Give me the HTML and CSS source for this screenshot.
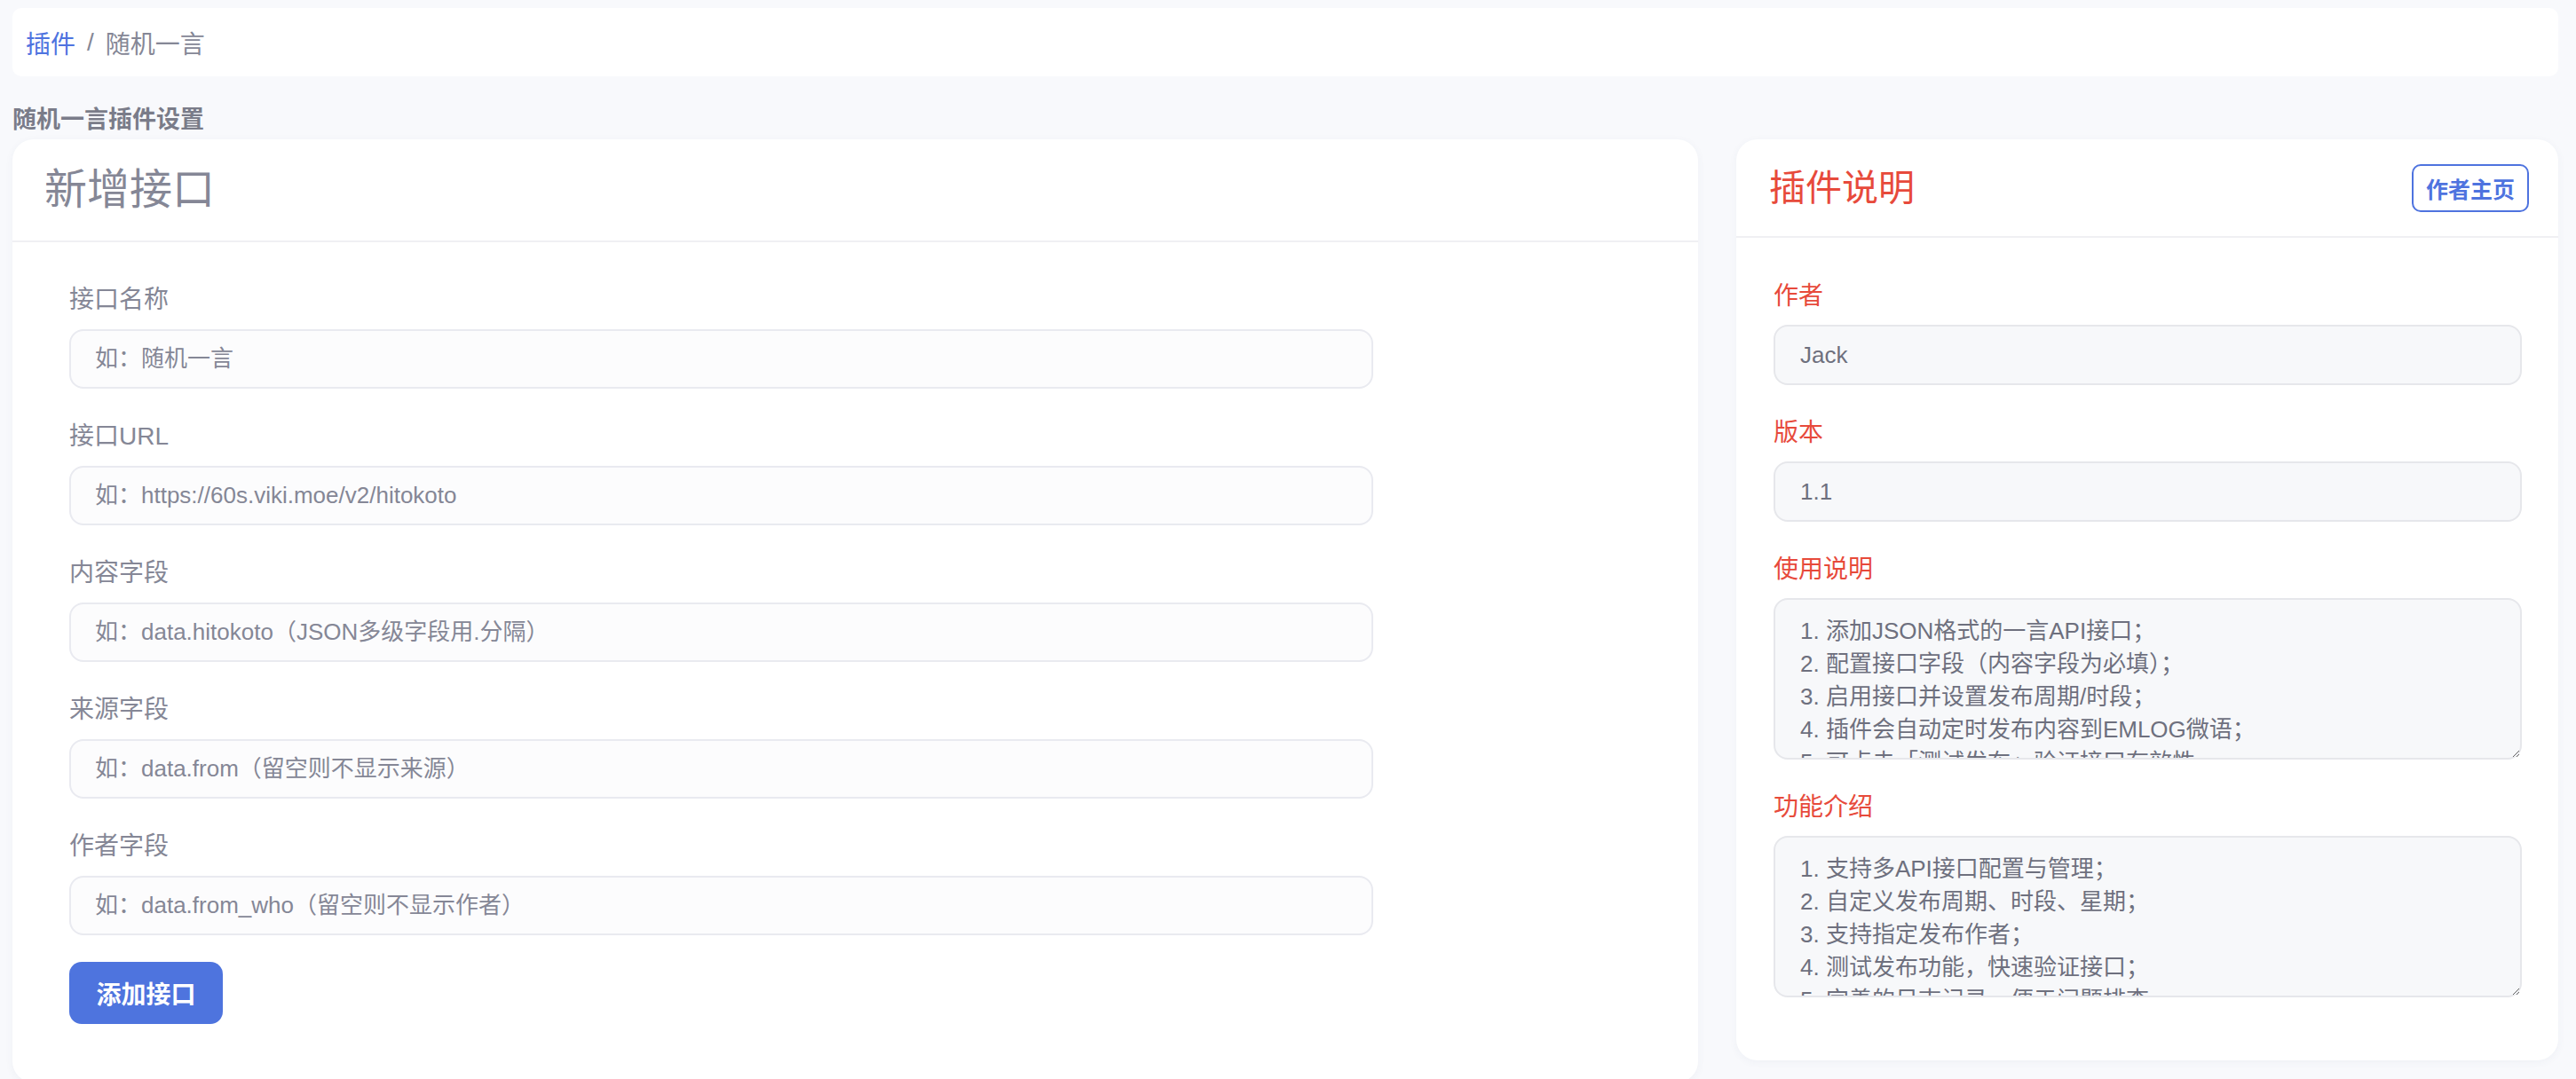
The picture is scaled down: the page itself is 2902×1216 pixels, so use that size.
FILE: index.html
```html
<!DOCTYPE html>
<html lang="zh-CN">
<head>
    <meta charset="UTF-8">
    <meta name="viewport" content="width=device-width, initial-scale=1.0">
    <title>随机一言插件设置</title>
    <link rel="stylesheet" href="styles.css">
</head>
<body>
    <nav class="breadcrumb">
        <a href="#" class="crumb-link">插件</a>
        <span class="crumb-sep">/</span>
        <span class="crumb-current">随机一言</span>
    </nav>

    <h6 class="page-title">随机一言插件设置</h6>

    <div class="layout">
        <div class="card">
            <div class="card-header">
                <h2 class="card-title">新增接口</h2>
            </div>
            <div class="card-body card-body-main">
                <form class="api-form" onsubmit="return false">
                    <div class="form-group">
                        <label>接口名称</label>
                        <input type="text" class="form-control" placeholder="如：随机一言">
                    </div>
                    <div class="form-group">
                        <label>接口URL</label>
                        <input type="text" class="form-control" placeholder="如：https://60s.viki.moe/v2/hitokoto">
                    </div>
                    <div class="form-group">
                        <label>内容字段</label>
                        <input type="text" class="form-control" placeholder="如：data.hitokoto（JSON多级字段用.分隔）">
                    </div>
                    <div class="form-group">
                        <label>来源字段</label>
                        <input type="text" class="form-control" placeholder="如：data.from（留空则不显示来源）">
                    </div>
                    <div class="form-group">
                        <label>作者字段</label>
                        <input type="text" class="form-control" placeholder="如：data.from_who（留空则不显示作者）">
                    </div>
                    <button type="submit" class="btn-primary">添加接口</button>
                </form>
            </div>
        </div>

        <div class="card card-side">
            <div class="card-header card-header-side">
                <h2 class="card-title side-title">插件说明</h2>
                <a href="#" class="btn-outline">作者主页</a>
            </div>
            <div class="card-body card-body-side">
                <div class="form-group">
                    <label class="label-red">作者</label>
                    <input type="text" class="form-control readonly" value="Jack" readonly>
                </div>
                <div class="form-group">
                    <label class="label-red">版本</label>
                    <input type="text" class="form-control readonly" value="1.1" readonly>
                </div>
                <div class="form-group">
                    <label class="label-red">使用说明</label>
                    <textarea class="form-control readonly info-text" readonly>1. 添加JSON格式的一言API接口；
2. 配置接口字段（内容字段为必填）；
3. 启用接口并设置发布周期/时段；
4. 插件会自动定时发布内容到EMLOG微语；
5. 可点击「测试发布」验证接口有效性。</textarea>
                </div>
                <div class="form-group">
                    <label class="label-red">功能介绍</label>
                    <textarea class="form-control readonly info-text" readonly>1. 支持多API接口配置与管理；
2. 自定义发布周期、时段、星期；
3. 支持指定发布作者；
4. 测试发布功能，快速验证接口；
5. 完善的日志记录，便于问题排查。</textarea>
                </div>
            </div>
        </div>
    </div>
</body>
</html>
```

FILE: styles.css
```css
* {
    box-sizing: border-box;
}
body {
    font-family: "Liberation Sans", "Noto Sans CJK SC", sans-serif;
    margin: 0;
    padding: 9px 20px 0 14px;
    background-color: #f8f9fc;
    color: #858796;
}
.breadcrumb {
    background: #fff;
    border-radius: 10px;
    height: 77px;
    padding: 0 15px;
    display: flex;
    align-items: center;
    font-size: 28px;
}
.crumb-link {
    color: #4e73df;
    text-decoration: none;
}
.crumb-sep {
    padding: 0 13px;
    color: #858796;
}
.crumb-current {
    color: #858796;
}
.page-title {
    margin: 29px 0 2px;
    font-size: 27px;
    line-height: 40px;
    font-weight: bold;
    color: #7a7c89;
}
.layout {
    display: grid;
    grid-template-columns: 1899fr 926fr;
    gap: 43px;
    align-items: start;
}
.card {
    background: #fff;
    border-radius: 24px;
    box-shadow: 0 2px 10px rgba(60, 70, 110, 0.05);
}
.card-header {
    padding: 28px 36px;
    border-bottom: 2px solid #f0f0f3;
}
.card-title {
    margin: 0;
    font-size: 48px;
    line-height: 58px;
    font-weight: normal;
    color: #858796;
}
.card-header-side {
    display: flex;
    justify-content: space-between;
    align-items: center;
    padding: 28px 33px 28px 37px;
    height: 111px;
}
.side-title {
    font-size: 41px;
    color: #e74a3b;
}
.btn-outline {
    display: flex;
    align-items: center;
    height: 54px;
    padding: 0 14px;
    border: 2px solid #4e73df;
    border-radius: 10px;
    color: #4e73df;
    font-size: 25px;
    font-weight: bold;
    text-decoration: none;
}
.card-body-main {
    padding: 45px 64px 66px;
}
.api-form {
    max-width: 1469px;
}
.api-form .form-group:last-of-type {
    margin-bottom: 30px;
}
.card-body-side {
    padding: 46px 41px 37px 42px;
}
.form-group {
    margin-bottom: 34px;
}
.form-group label {
    display: block;
    font-size: 28px;
    line-height: 40px;
    margin-bottom: 13px;
    color: #858796;
}
.card-body-side .form-group label {
    margin-bottom: 12px;
}
.form-group .label-red {
    color: #e74a3b;
}
.form-control {
    display: block;
    width: 100%;
    height: 67px;
    padding: 0 27px;
    font-family: inherit;
    font-size: 26px;
    color: #6e707e;
    background: #fcfcfd;
    border: 2px solid #e9eaf0;
    border-radius: 16px;
    outline: none;
}
.form-control::placeholder {
    color: #858796;
}
.form-control.readonly {
    background: #f7f8fa;
    border-color: #e6e7eb;
    padding: 0 28px;
    height: 68px;
}
.form-control.info-text {
    height: 182px;
    padding: 17px 28px;
    line-height: 37px;
    resize: vertical;
    overflow: hidden;
}
.btn-primary {
    display: block;
    height: 70px;
    width: 173px;
    padding: 0;
    border: none;
    border-radius: 14px;
    background: #4e74de;
    color: #fff;
    font-family: inherit;
    font-size: 28px;
    font-weight: bold;
    cursor: pointer;
}
```
